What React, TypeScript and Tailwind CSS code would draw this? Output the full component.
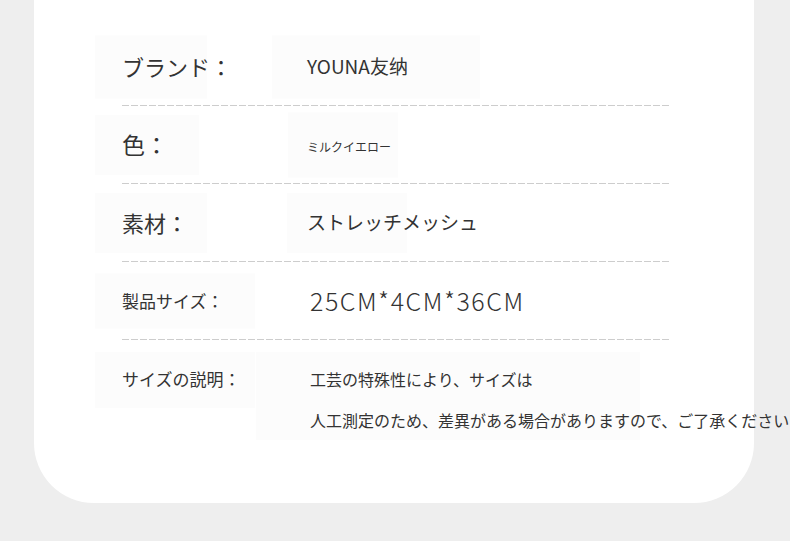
const font = { fontFamily: '"Noto Sans CJK JP", "Noto Sans", sans-serif' };

type Spec = {
  label: string;
  labelClass: string;
  labelBox: string;
  valueBox: string;
  value: React.ReactNode;
};

const specs: Spec[] = [
  {
    label: "ブランド：",
    labelClass: "text-[22px]",
    labelBox: "w-[112px] h-[63px] -ml-[27px]",
    valueBox: "w-[208px] h-[63px] -ml-[35px]",
    value: <span className="text-[19px]">YOUNA友纳</span>,
  },
  {
    label: "色：",
    labelClass: "text-[23px]",
    labelBox: "w-[104px] h-[60px] -ml-[27px]",
    valueBox: "w-[110px] h-[65px] -ml-[19px]",
    value: <span className="text-[12px]">ミルクイエロー</span>,
  },
  {
    label: "素材：",
    labelClass: "text-[22px]",
    labelBox: "w-[112px] h-[60px] -ml-[27px]",
    valueBox: "w-[120px] h-[60px] -ml-[20px]",
    value: <span className="text-[19px]">ストレッチメッシュ</span>,
  },
  {
    label: "製品サイズ：",
    labelClass: "text-[17px]",
    labelBox: "w-[160px] h-[55px] -ml-[27px]",
    valueBox: "w-[0px] h-[55px]",
    value: (
      <span className="pl-[3px] text-[25px] font-light tracking-[1.5px]">
        25CM*4CM*36CM
      </span>
    ),
  },
];

function Dashes() {
  return (
    <div className="h-px w-[547px] bg-[repeating-linear-gradient(90deg,#cdcdcd_0_7px,transparent_7px_9px)]" />
  );
}

function Row({ s }: { s: Spec }) {
  return (
    <div className="relative flex h-[77px] items-center">
      <div className={`absolute top-1/2 -translate-y-1/2 bg-[#fcfcfc] ${s.labelBox}`} />
      <div
        className={`absolute top-1/2 left-[185px] -translate-y-1/2 bg-[#fcfcfc] ${s.valueBox}`}
      />
      <div className={`relative w-[185px] shrink-0 text-[#333] ${s.labelClass}`}>{s.label}</div>
      <div className="relative text-[#333]">{s.value}</div>
    </div>
  );
}

export default function App() {
  return (
    <div className="h-[541px] w-[790px] overflow-hidden bg-[#eeeeee]" style={font}>
      <div className="ml-[34px] h-[503px] w-[720px] rounded-b-[60px] bg-white pt-[28px] pl-[88px]">
        {specs.map((s) => (
          <div key={s.label}>
            <Row s={s} />
            <Dashes />
          </div>
        ))}
        <div className="relative flex pt-[28px]">
          <div className="absolute top-[12px] -left-[27px] h-[56px] w-[160px] bg-[#fcfcfc]" />
          <div className="absolute top-[12px] left-[134px] h-[88px] w-[384px] bg-[#fcfcfc]" />
          <div className="relative w-[188px] shrink-0 text-[17px] leading-[22px] text-[#333]">
            サイズの説明：
          </div>
          <div className="relative text-[16px] leading-[41px] whitespace-nowrap text-[#333]">
            <div className="-mt-[9px]">工芸の特殊性により、サイズは</div>
            <div>人工測定のため、差異がある場合がありますので、ご了承ください</div>
          </div>
        </div>
      </div>
    </div>
  );
}
